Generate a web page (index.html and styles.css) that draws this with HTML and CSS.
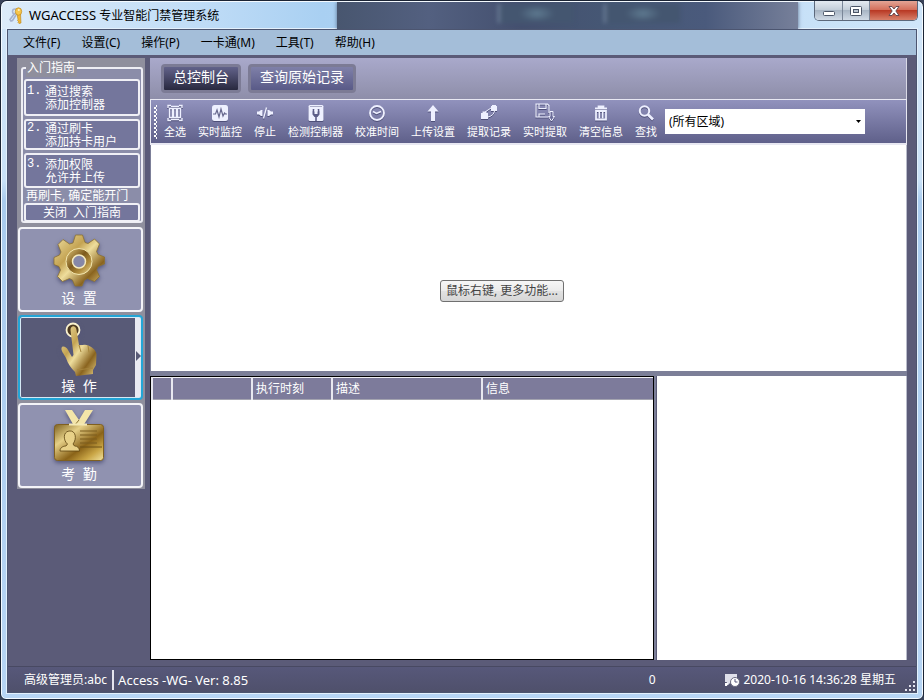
FILE: index.html
```html
<!DOCTYPE html>
<html lang="zh-CN">
<head>
<meta charset="utf-8">
<title>WGACCESS 专业智能门禁管理系统</title>
<link rel="stylesheet" href="styles.css">
</head>
<body>
<svg class="defs" width="0" height="0" aria-hidden="true">
  <defs>
    <linearGradient id="gold" x1="0" y1="0" x2="1" y2="1">
      <stop offset="0" stop-color="#f1e2a6"/>
      <stop offset=".35" stop-color="#c4a352"/>
      <stop offset=".5" stop-color="#eedd9c"/>
      <stop offset=".75" stop-color="#8a641f"/>
      <stop offset="1" stop-color="#e6cf86"/>
    </linearGradient>
    <linearGradient id="goldRing" x1="0" y1="0" x2="1" y2="1">
      <stop offset="0" stop-color="#e0c678"/>
      <stop offset=".45" stop-color="#7d5a1c"/>
      <stop offset=".7" stop-color="#b18d3c"/>
      <stop offset="1" stop-color="#f0dfa0"/>
    </linearGradient>
    <linearGradient id="card" x1="0" y1="0" x2="1" y2="1">
      <stop offset="0" stop-color="#7d6120"/>
      <stop offset=".3" stop-color="#e5cf86"/>
      <stop offset=".6" stop-color="#8a6318"/>
      <stop offset=".8" stop-color="#c9a545"/>
      <stop offset="1" stop-color="#f1e3a0"/>
    </linearGradient>
  </defs>
</svg>
<div class="window">
  <header class="titlebar">
    <svg class="app-icon" width="14" height="17" viewBox="0 0 14 17">
      <path d="M6 6 1 12.500l1 1.500 1.500-.5L7 8" fill="none" stroke="#a5b1cc" stroke-width="1.600"/>
      <circle cx="6" cy="4.500" r="2.500" fill="none" stroke="#a9b5d0" stroke-width="1.500"/>
      <path d="M8 7h3.500l.5 9-2 .5-1-1 .5-1-1-1 .5-1z" fill="#f2b632" stroke="#b98418" stroke-width=".6"/>
      <ellipse cx="9.500" cy="4.500" rx="3.200" ry="3.700" fill="#f7c64c" stroke="#c08a1c" stroke-width=".7"/>
      <circle cx="9.800" cy="3" r="1" fill="#fff3c8"/>
    </svg>
    <h1 class="title"><span class="latin">WGACCESS</span> 专业智能门禁管理系统</h1>
    <div class="backdrop"><i></i><i></i></div>
    <div class="caption">
      <button class="cap cap-min" aria-label="最小化"><svg width="12" height="6" viewBox="0 0 12 6"><rect x=".5" y=".5" width="11" height="4" rx="1" fill="#fff" stroke="#4b5567"/></svg></button>
      <button class="cap cap-max" aria-label="最大化"><svg width="12" height="10" viewBox="0 0 12 10"><rect x=".5" y=".5" width="11" height="9" rx="1" fill="#fff" stroke="#4b5567"/><rect x="3.500" y="3.500" width="5" height="3" fill="#b9c3d0" stroke="#4b5567"/></svg></button>
      <button class="cap cap-close" aria-label="关闭"><svg width="12" height="10" viewBox="0 0 12 10"><path d="M1 .5h3L6 3 8 .5h3L7.800 5 11 9.500H8L6 7 4 9.500H1L4.200 5z" fill="#fff" stroke="#5b3f48" stroke-width=".9"/></svg></button>
    </div>
  </header>
  <div class="client">
    <nav class="menu">
      <a href="#file">文件(F)</a><a href="#settings">设置(C)</a><a href="#operate">操作(P)</a><a href="#card">一卡通(M)</a><a href="#tools">工具(T)</a><a href="#help">帮助(H)</a>
    </nav>
    <div class="body">
      <aside class="side">
        <fieldset class="guide">
          <legend>入门指南</legend>
          <button class="step step-first"><b>1.</b><span>通过搜索<br>添加控制器</span></button>
          <button class="step"><b>2.</b><span>通过刷卡<br>添加持卡用户</span></button>
          <button class="step step-last"><b>3.</b><span>添加权限<br>允许并上传</span></button>
          <p class="hint">再刷卡, 确定能开门</p>
          <button class="close-guide">关闭&nbsp; 入门指南</button>
        </fieldset>
        <button class="tile">
          <svg width="56" height="56" viewBox="0 0 56 56">
            <path d="M24.500 2h7l2.500 7.500 3 1 6.500-4.500 5 5-3 7.500 1.500 3 6.500 2.500v7l-6.500 2.500-1.500 3.500 3 6.500-5 5-7-3-3 1.500-2.500 6h-7l-2.500-6-3-1.500-7 3-5-5 3-6.500-1.500-3.500L3 31.500v-7L8.500 22l1.500-3-3-7.500 5-5 6.500 4.500 3.500-1z" fill="url(#gold)" stroke="#8b7132" stroke-width=".8" stroke-linejoin="round"/>
            <circle cx="28" cy="28.500" r="13" fill="url(#goldRing)" stroke="#f3e6ae"/>
            <circle cx="28" cy="28.500" r="6.500" fill="#8688a8" stroke="#f5ebbf" stroke-width="1.500"/>
          </svg>
          <span>设&nbsp; 置</span>
        </button>
        <button class="tile tile-on">
          <svg width="56" height="56" viewBox="0 0 56 56">
            <circle cx="22" cy="9" r="6.500" fill="#4d3a20" stroke="#fbf3cf" stroke-width="1.800"/>
            <path d="M19.500 9c0-5 5.500-5 6 0l2.500 15c4 0 7-1 9 .5 5 2 7.500 4.500 8.500 8.500l-.5 11-3 5v4l-17 2-1-4c-4-4-7-8-9-14-2-4-5-7-4.500-10 1-3 5-1 6.500 2l4 7 1.500-2z" fill="url(#gold)"/>
            <path d="m28 24 2 7m7-6.500 1 7M26 49l16-2" stroke="#a5843c" fill="none"/>
          </svg>
          <span>操&nbsp; 作</span>
        </button>
        <button class="tile">
          <svg width="56" height="56" viewBox="0 0 56 56">
            <path d="M14 1h7l7 10 6-10h8L32 17h-9z" fill="#f3e5a9"/>
            <path d="m28 11-5 6" stroke="#8b7132"/>
            <path d="M20 15h15v2H20z" fill="#2e2714"/>
            <rect x="3.500" y="15.500" width="49" height="36" rx="3" fill="url(#card)" stroke="#806020"/>
            <path d="M18 14.500h18v2H18z" fill="#f4e8b4"/>
            <path d="M9 42c0-4 4-5 6-5l1.500-2c-4-3-5-12 1.500-13 7-1 8 8 4 13l1.500 2c3 0 5 2 5 5z" fill="#e8d188" stroke="#5c430f" stroke-width=".8"/>
            <path d="M29 22h17M29 26h17M29 30h17M29 34h17" stroke="#7b5c1e"/>
            <path d="M29 38h22" stroke="#6d5016"/>
          </svg>
          <span>考&nbsp; 勤</span>
        </button>
      </aside>
      <main class="main">
        <div class="tabs">
          <button class="tab tab-on">总控制台</button>
          <button class="tab">查询原始记录</button>
        </div>
        <div class="toolbar">
          <div class="grip"></div>
          <button class="tool"><svg width="20" height="20" viewBox="0 0 20 20"><path d="M3 5V2.500h3M17 5V2.500h-3M3 15v2.500h3M17 15v2.500h-3M6 3.500h8M6 16.500h8" fill="none" stroke="#eef0ff" stroke-width="1.400"/><path d="M4.500 5.500h3v9h-3zm4 0h3v9h-3zm4 0h3v9h-3z" fill="none" stroke="#eef0ff" stroke-width="1.400"/></svg>全选</button>
          <button class="tool"><svg width="20" height="20" viewBox="0 0 20 20"><rect x="2" y="2" width="16" height="16" rx="2.500" fill="#eef0ff"/><path d="M3 11h2.500l1.500-4 2 7 2-8 2 7 1.500-3 1 1H17" fill="none" stroke="#67688f" stroke-width="1.200"/></svg>实时监控</button>
          <button class="tool"><svg width="20" height="20" viewBox="0 0 20 20"><path d="M6 7h1.500v6H6l-2-1.500H2v-3h2zM12.500 7H14l2 1.500h2v3h-2L14 13h-1.500z" fill="#eef0ff"/><path d="m8.500 15.500 3-11" stroke="#eef0ff" stroke-width="1.400"/></svg>停止</button>
          <button class="tool"><svg width="20" height="20" viewBox="0 0 20 20"><rect x="2.500" y="2" width="15" height="16" rx="1.500" fill="#eef0ff"/><path d="M4.500 3.500h11" stroke="#67688f" stroke-dasharray="1 1"/><path d="M7.500 6v3M12.500 6v3" stroke="#5c5d88" stroke-width="1.600"/><path d="M6.500 8.500h7v3L11.500 14h-3l-2-2.500zM9.200 14h1.600v4H9.200z" fill="#5c5d88"/><path d="M8.500 7h3v4h-3z" fill="#eef0ff"/></svg>检测控制器</button>
          <button class="tool"><svg width="20" height="20" viewBox="0 0 20 20"><circle cx="10" cy="10" r="7" fill="none" stroke="#eef0ff" stroke-width="1.900"/><path d="m6 8.500 3.500 2 4.500-2" fill="none" stroke="#eef0ff" stroke-width="1.500"/></svg>校准时间</button>
          <button class="tool"><svg width="20" height="20" viewBox="0 0 20 20"><path d="m10 2 5.500 6.500H12V18H8V8.500H4.500z" fill="#eef0ff"/></svg>上传设置</button>
          <button class="tool"><svg width="20" height="20" viewBox="0 0 20 20"><path d="M2 10h1.500V8.500h4V10H9v6H2zM12 3h1V2h4v1h1v5h-6z" fill="#eef0ff"/><path d="m6 9 6-4M9 14c4-1 6-3 6.500-6" fill="none" stroke="#eef0ff"/></svg>提取记录</button>
          <button class="tool"><svg width="20" height="20" viewBox="0 0 20 20"><path d="M13 14H1V1h11.500l1.500 1.500V10M4 1v4.500h7V1M4 14v-3h6" fill="none" stroke="#eef0ff" stroke-width="1.200"/><path d="M15 8.500h3v5h1.500l-3 4.500-3-4.500H15z" fill="#6c6d99" stroke="#eef0ff"/></svg>实时提取</button>
          <button class="tool"><svg width="20" height="20" viewBox="0 0 20 20"><path d="M4 5.500h12M7.500 5V3.500h5V5" fill="none" stroke="#eef0ff" stroke-width="1.800"/><path d="M5 8h10v8.500H5z" fill="none" stroke="#eef0ff" stroke-width="1.800"/><path d="M8.300 9v6.500m3.400-6.500v6.500" stroke="#eef0ff" stroke-width="1.600"/></svg>清空信息</button>
          <button class="tool"><svg width="20" height="20" viewBox="0 0 20 20"><circle cx="8.500" cy="8" r="4.700" fill="none" stroke="#eef0ff" stroke-width="2"/><path d="m12 11.500 5 5" stroke="#eef0ff" stroke-width="2.600"/></svg>查找</button>
          <div class="zone">
            <select aria-label="区域"><option>(所有区域)</option></select>
            <svg class="zone-arrow" width="5" height="3" viewBox="0 0 5 3"><path d="M0 0h5L2.500 3z" fill="#000"/></svg>
          </div>
        </div>
        <div class="panes">
          <section class="doors">
            <button class="more">鼠标右键, 更多功能...</button>
          </section>
          <div class="lower">
            <section class="events">
              <table>
                <colgroup><col class="c-flag"><col class="c-no"><col class="c-time"><col class="c-desc"><col></colgroup>
                <thead><tr><th></th><th></th><th>执行时刻</th><th>描述</th><th>信息</th></tr></thead>
              </table>
            </section>
            <section class="detail"></section>
          </div>
        </div>
      </main>
    </div>
    <footer class="status">
      <span class="user">高级管理员:abc</span>
      <span class="version latin">Access -WG- Ver: 8.85</span>
      <span class="count">0</span>
      <span class="clock">
        <svg width="16" height="14" viewBox="0 0 16 14"><path d="M1 1h12v8H7l-3 3H2l1-3H1z" fill="#dfe0ea"/><path d="M1 10h3l-1 3H1z" fill="#fff"/><circle cx="11" cy="9" r="4.500" fill="#fff" stroke="#6b6b80"/><path d="M11 6v3h2.500" fill="none" stroke="#55557a"/></svg>
        2020-10-16 14:36:28 星期五
      </span>
      <svg class="resize" width="12" height="12" viewBox="0 0 12 12"><path d="M9 1h2v2H9zM5 5h2v2H5zm4 0h2v2H9zM1 9h2v2H1zm4 0h2v2H5zm4 0h2v2H9z" fill="#e4e4ee"/></svg>
    </footer>
  </div>
</div>
</body>
</html>
```
FILE: styles.css
```css
* { box-sizing: border-box; }

html, body { height: 100%; }

body {
  margin: 0;
  background: #39435a;
  font: 12px/16px "Noto Sans", "Noto Sans CJK SC", sans-serif;
  color: #000;
}

button, select {
  margin: 0;
  padding: 0;
  border: 0;
  font: inherit;
  color: inherit;
}

.defs { position: absolute; }

.latin { font-size: 13px; }

.window {
  display: flex;
  flex-direction: column;
  min-height: 100%;
  padding: 0 6px 6px;
  border: 1px solid #1b2434;
  border-radius: 7px 7px 6px 6px;
  box-shadow: inset 0 0 0 1px #f4faff;
  background: linear-gradient(#d3e6f8 0, #c9e1f7 180px, #a9cbee 200px, #b7d5f4 100%);
}

/* Title bar */
.titlebar {
  display: flex;
  align-items: center;
  height: 28px;
  margin: 0 -5px;
  padding-left: 7px;
  background: linear-gradient(90deg, #dcebf9, #c3def7 180px, #a9d0f2 320px, #cfe5f9);
  border-top: 1px solid #f4faff;
  border-radius: 6px 6px 0 0;
}

.title {
  margin: 0 0 0 6px;
  font: inherit;
  flex: 0 0 308px;
}

.backdrop {
  flex: 1;
  align-self: stretch;
  display: flex;
  justify-content: flex-end;
  gap: 30px;
  padding: 2px 118px 6px 0;
  background: linear-gradient(90deg, #48566f, #536080 20%, #44506f 40%, #465875 60%, #4a5a7c 80%, #77809a);
  box-shadow: 0 0 4px #56698a;
  clip-path: inset(0 -6px);
}

.backdrop i {
  width: 76px;
  background: radial-gradient(ellipse 18px 8px at 50% 50%, #5f7b91, transparent), #445670;
  border-left: 2px solid #788ba2;
  filter: blur(2px);
}

.caption {
  display: flex;
  align-self: flex-start;
  height: 20px;
  margin: -1px 4px 0 16px;
  border: 1px solid #5c687b;
  border-top: 0;
  border-radius: 0 0 5px 5px;
  overflow: hidden;
}

.cap {
  display: flex;
  align-items: center;
  justify-content: center;
  width: 27px;
  border-right: 1px solid #7a8698;
  background: linear-gradient(#e4eaf1, #c4ced9 45%, #a8b5c4 50%, #d0dae6);
}

.cap-min { width: 28px; padding-top: 6px; }

.cap-close {
  width: 47px;
  border: 0;
  background: linear-gradient(#e3a596, #d4705c 45%, #b93a25 50%, #d8806a);
}

/* Client area */
.client {
  flex: 1;
  display: flex;
  flex-direction: column;
  border: 1px solid #4c5570;
  box-shadow: 0 0 0 1px #e3f0fc;
  background: #5b5b78;
}

.menu {
  display: flex;
  gap: 21px;
  height: 25px;
  padding: 5px 15px 0;
  background: #a4bed9;
}

.menu a { color: #000; text-decoration: none; }

.body {
  flex: 1;
  display: flex;
  gap: 5px;
  padding: 3px 9px 6px;
}

/* Sidebar */
.side {
  display: flex;
  flex-direction: column;
  gap: 3px;
  align-self: flex-start;
  flex: 0 0 128px;
  padding: 0 2px 1px 1px;
  background: #8f8f9d;
  color: #fff;
}

.guide {
  display: flex;
  flex-direction: column;
  gap: 3px;
  min-width: 0;
  height: 164px;
  margin: 1px 0 1px 3px;
  padding: 2px 1px 0;
  border: 2px solid #eeeef4;
  border-radius: 3px;
  background: #8b8da9;
}

.guide legend {
  margin-left: 2px;
  padding: 0 2px 0 1px;
  background: #8f8f9d;
  line-height: 18px;
}

.step, .close-guide {
  border: 2px solid #f0f0f6;
  border-radius: 3px;
  background: #74769c;
}

.step {
  display: flex;
  flex: 0 0 31px;
  padding: 1px 1px 0;
  text-align: left;
  line-height: 13px;
}

.step b { flex: 0 0 18px; font-weight: 400; font-family: "Liberation Mono", monospace; }
.step-first { flex-basis: 37px; padding-top: 4px; }
.step-last { flex-basis: 35px; padding-top: 3px; }

.hint {
  margin: -1px 0 -2px 2px;
  line-height: 12px;
  white-space: nowrap;
}

.close-guide {
  flex: 0 0 19px;
  line-height: 14px;
}

.tile {
  position: relative;
  display: flex;
  flex-direction: column;
  align-items: center;
  height: 85px;
  padding-top: 4px;
  padding-right: 3px;
  border: 2px solid #f4f4f8;
  border-radius: 4px;
  background: #9092b0;
  font-size: 14px;
  line-height: 18px;
}

.tile svg { filter: drop-shadow(0 2px 2px #55567a); }

.tile-on {
  border-color: #23a5d6;
  background: linear-gradient(90deg, #585a77 0 115px, #e9eaf2 115px);
  box-shadow: inset 0 0 0 1px #d5e9f5;
}

.tile-on::after {
  content: "";
  position: absolute;
  right: -5px;
  top: 34px;
  border: 5px solid transparent;
  border-left-color: #585a77;
}

/* Workspace */
.main {
  flex: 1;
  min-width: 0;
  display: flex;
  flex-direction: column;
}

.tabs {
  display: flex;
  gap: 7px;
  height: 41px;
  padding: 6px 11px;
  border-right: 1px solid #d9d9e6;
  background: linear-gradient(#a9a9cb, #8e8ea9);
}

.tab {
  padding: 0 9px 4px;
  border: 3px solid #7c7b95;
  border-radius: 4px;
  background: linear-gradient(#7f80a9, #595a87);
  color: #fff;
  font-size: 14px;
  line-height: 18px;
}

.tab-on { background: linear-gradient(#62628a, #29293f); }

.toolbar {
  display: flex;
  gap: 12px;
  height: 46px;
  border: 1px solid #e8e8f2;
  border-width: 1px 1px 2px;
  background: linear-gradient(#9192bd, #5f608a);
}

.grip {
  flex: 0 0 3px;
  margin: 5px -5px 4px 3px;
  background: repeating-conic-gradient(#fff 0 25%, transparent 0 50%) 0 0 / 4px 4px;
}

.tool {
  display: flex;
  flex-direction: column;
  align-items: center;
  padding-top: 3px;
  background: none;
  color: #fff;
  font-size: 11px;
  line-height: 17px;
  white-space: nowrap;
}

.tool svg { margin: 0 -4px; filter: drop-shadow(0 1px 0 #4e4f78); }

.zone {
  position: relative;
  flex: 0 1 200px;
  height: 25px;
  margin: 9px 0 0 -4px;
}

.zone select {
  width: 100%;
  height: 100%;
  padding: 0 4px;
  border-radius: 0;
  appearance: none;
  background: #fff;
}

.zone-arrow {
  position: absolute;
  right: 4px;
  top: 11px;
  pointer-events: none;
}

.panes {
  flex: 1;
  display: grid;
  grid-template-rows: 226fr 284fr;
  gap: 5px;
  background: #7c7f98;
}

.doors {
  position: relative;
  margin-left: 1px;
  background: #fff;
  border-right: 1px solid #b9bccb;
}

.more {
  position: absolute;
  left: 289px;
  top: 135px;
  height: 22px;
  padding: 0 5px;
  border: 1px solid #707070;
  border-radius: 3px;
  background: linear-gradient(#f6f6f6, #ebebeb 50%, #e2e2e2 50%, #d6d6d6);
  color: #444;
  white-space: nowrap;
}

.lower {
  display: grid;
  grid-template-columns: 504fr 251fr;
  gap: 2px;
}

.events {
  border: 1px solid #000;
  background: #fff;
}

.detail {
  border-left: 1px solid #5b5b78;
  border-right: 1px solid #b9bccb;
  background: #fff;
}

.events table {
  width: 100%;
  table-layout: fixed;
  border-collapse: collapse;
  border-top: 1px solid #f2f2f6;
  border-bottom: 1px solid #a4a4b0;
  background: #7d7b9b;
  color: #fff;
}

.events th {
  height: 22px;
  padding: 0 3px;
  border-left: 2px solid #e8e8f0;
  font-weight: 400;
  line-height: 18px;
  text-align: left;
}

.c-flag { width: 20px; }
.c-no, .c-time { width: 80px; }
.c-desc { width: 150px; }

/* Status bar */
.status {
  position: relative;
  display: flex;
  align-items: center;
  height: 26px;
  padding: 0 20px 0 16px;
  border-top: 1px solid #484962;
  background: linear-gradient(#57587a, #4f506b);
  color: #fff;
}

.version {
  margin-left: 5px;
  padding-left: 4px;
  border-left: 2px solid #e4e4ee;
  line-height: 20px;
}

.count { margin-left: auto; }

.clock {
  display: flex;
  align-items: center;
  gap: 4px;
  margin-left: 68px;
}

.resize {
  position: absolute;
  right: 0;
  bottom: 0;
}
```
